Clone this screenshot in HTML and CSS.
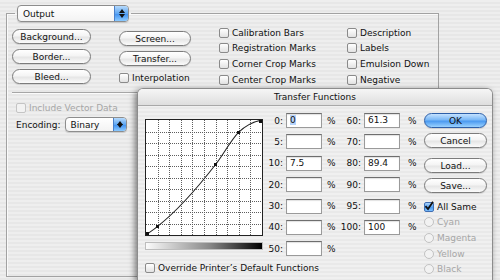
FILE: index.html
```html
<!DOCTYPE html>
<html lang="en">
<head>
  <meta charset="UTF-8" />
  <title>Output Options</title>
  <link rel="stylesheet" href="styles.css">
</head>
<body>
  <fieldset class="group">
    <legend><span class="popup popup-output">Output<i class="arrows"></i></span></legend>
    <div class="options">
      <div class="stack">
        <button class="aqua">Background...</button>
        <button class="aqua">Border...</button>
        <button class="aqua">Bleed...</button>
      </div>
      <div class="stack second">
        <button class="aqua">Screen...</button>
        <button class="aqua">Transfer...</button>
        <label class="check"><span class="box"></span>Interpolation</label>
      </div>
      <div class="check-list">
        <label class="check"><span class="box"></span>Calibration Bars</label>
        <label class="check"><span class="box"></span>Registration Marks</label>
        <label class="check"><span class="box"></span>Corner Crop Marks</label>
        <label class="check"><span class="box"></span>Center Crop Marks</label>
      </div>
      <div class="check-list">
        <label class="check"><span class="box"></span>Description</label>
        <label class="check"><span class="box"></span>Labels</label>
        <label class="check"><span class="box"></span>Emulsion Down</label>
        <label class="check"><span class="box"></span>Negative</label>
      </div>
    </div>
    <hr class="sep">
    <label class="check disabled vector"><span class="box"></span>Include Vector Data</label>
    <div class="encoding">
      <span>Encoding:</span>
      <span class="popup popup-small">Binary<i class="arrows"></i></span>
    </div>
  </fieldset>

  <div class="dialog">
    <div class="dialog-title">Transfer Functions</div>
    <div class="dialog-body">
      <div class="curve-col">
        <div class="graph">
          <svg width="116" height="115" viewBox="0 0 116 115">
            <g stroke="#5e5e5e" stroke-width="1" stroke-dasharray="1 1">
              <path d="M12.5 0V115M23.5 0V115M35.5 0V115M46.5 0V115M58.5 0V115M70.5 0V115M81.5 0V115M93.5 0V115M104.5 0V115"/>
              <path d="M0 12.5H116M0 23.5H116M0 35.5H116M0 46.5H116M0 58.5H116M0 69.5H116M0 81.5H116M0 92.5H116M0 104.5H116"/>
            </g>
            <g transform="scale(1.16 1.15)">
              <path fill="none" stroke="#222" stroke-width="0.9"
                d="M0 100C3.33 97.5 6.67 95.33 10 92.5C26.67 79.2 43.33 60.37 60 38.7C66.67 30.03 73.33 17.27 80 10.6C86.67 3.93 93.33 1.33 100 0"/>
            </g>
            <g fill="#111">
              <rect x="0" y="112" width="3" height="3"/>
              <rect x="10" y="105" width="3" height="3"/>
              <rect x="68" y="43" width="3" height="3"/>
              <rect x="91" y="11" width="3" height="3"/>
              <rect x="113" y="0" width="3" height="3"/>
            </g>
          </svg>
        </div>
        <div class="ramp"></div>
        <label class="check override"><span class="box"></span>Override Printer’s Default Functions</label>
      </div>

      <div class="fields">
        <span class="lbl">0:</span><span class="field"><span class="sel">0</span></span><span class="pct">%</span>
        <span class="lbl">60:</span><span class="field">61.3</span><span class="pct pct2">%</span>

        <span class="lbl">5:</span><span class="field"></span><span class="pct">%</span>
        <span class="lbl">70:</span><span class="field"></span><span class="pct pct2">%</span>

        <span class="lbl">10:</span><span class="field">7.5</span><span class="pct">%</span>
        <span class="lbl">80:</span><span class="field">89.4</span><span class="pct pct2">%</span>

        <span class="lbl">20:</span><span class="field"></span><span class="pct">%</span>
        <span class="lbl">90:</span><span class="field"></span><span class="pct pct2">%</span>

        <span class="lbl">30:</span><span class="field"></span><span class="pct">%</span>
        <span class="lbl">95:</span><span class="field"></span><span class="pct pct2">%</span>

        <span class="lbl">40:</span><span class="field"></span><span class="pct">%</span>
        <span class="lbl">100:</span><span class="field">100</span><span class="pct pct2">%</span>

        <span class="lbl">50:</span><span class="field"></span><span class="pct">%</span>
      </div>

      <div class="actions">
        <button class="aqua default">OK</button>
        <button class="aqua cancel">Cancel</button>
        <button class="aqua load">Load...</button>
        <button class="aqua save">Save...</button>
        <div class="inks">
          <label class="check checked">
            <span class="box"><svg width="10" height="10" viewBox="0 0 10 10"><path d="M1.5 5.2L4 8L9 0.8" fill="none" stroke="#111" stroke-width="1.8"/></svg></span>All Same
          </label>
          <label class="radio disabled"><span class="dot"></span>Cyan</label>
          <label class="radio disabled"><span class="dot"></span>Magenta</label>
          <label class="radio disabled"><span class="dot"></span>Yellow</label>
          <label class="radio disabled"><span class="dot"></span>Black</label>
        </div>
      </div>
    </div>
  </div>
</body>
</html>
```

FILE: styles.css
```css
* { box-sizing: border-box; }
body {
  margin: 0;
  padding: 5px 0 0 6px;
  width: 500px;
  height: 280px;
  overflow: hidden;
  font-family: 'DejaVu Sans', sans-serif;
  font-size: 9px;
  color: #111;
  background: repeating-linear-gradient(#eeeeee 0 2px, #e7e7e7 2px 4px);
}

/* outer group box */
.group {
  margin: 0;
  width: 433px;
  height: 272px;
  padding: 7px 5px 0 5px;
  border: 1px solid #a2a2a2;
  box-shadow: inset 1px 1px 0 #fafafa;
  min-width: 0;
}
.group legend {
  padding: 0 2px;
  margin-left: 3px;
}

/* popup menus */
.popup {
  position: relative;
  display: flex;
  align-items: center;
  background: linear-gradient(#ffffff, #f3f3f3);
  border: 1px solid #8d8d8d;
  border-radius: 4px;
  box-shadow: 0 1px 1px rgba(0,0,0,0.15);
  overflow: hidden;
}
.popup-output { width: 112px; height: 17px; padding-left: 5px; }
.popup-small { width: 62px; height: 15px; padding-left: 5px; }
.arrows {
  position: absolute;
  top: 0;
  right: 0;
  bottom: 0;
  width: 14px;
  border-left: 1px solid #4a7fc8;
  background: linear-gradient(#b6dafc, #5ea6f2 50%, #3d8ff0 51%, #8ccaff);
}
.popup-small .arrows { width: 13px; }
.arrows::before, .arrows::after {
  content: "";
  position: absolute;
  left: 50%;
  margin-left: -3px;
  border-left: 3px solid transparent;
  border-right: 3px solid transparent;
}
.arrows::before { top: 3px; border-bottom: 4px solid #111; }
.arrows::after { bottom: 3px; border-top: 4px solid #111; }

/* option columns */
.options {
  display: grid;
  grid-template-columns: 107px 100px 128px auto;
  align-items: start;
}
.stack {
  display: flex;
  flex-direction: column;
  align-items: flex-start;
  gap: 5px;
}
.stack .aqua { width: 79px; }
.stack.second { margin-top: 2px; }
.stack.second .aqua { width: 72px; }
.stack.second .check { margin-top: 1px; }
.check-list {
  display: flex;
  flex-direction: column;
  margin-top: -4px;
}
.check-list .check { height: 15.6px; }

/* aqua push buttons */
.aqua {
  height: 15px;
  padding: 0;
  font-family: inherit;
  font-size: 9px;
  color: #111;
  border: 1px solid #7c7c7c;
  border-radius: 8px;
  background: linear-gradient(#ffffff, #f4f4f4 45%, #e6e6e6 55%, #fbfbfb);
  box-shadow: 0 1px 1px rgba(0,0,0,0.12);
}
.aqua.default {
  border-color: #2d5fa8;
  background: linear-gradient(#c4e2ff, #7ab8f6 45%, #4b9af0 55%, #9ad2ff);
}

/* checkboxes and radios */
.check, .radio {
  display: flex;
  align-items: center;
  gap: 3px;
  height: 11px;
  white-space: nowrap;
}
.box {
  width: 10px;
  height: 10px;
  flex: none;
  border: 1px solid #8a8a8a;
  border-radius: 2px;
  background: linear-gradient(#ffffff, #e2e2e2);
}
.check.checked .box {
  position: relative;
  border-color: #3f6eb3;
  background: linear-gradient(#aad3fb, #4e9cf0 55%, #7dc0ff);
}
.check.checked svg { position: absolute; left: -1px; top: -2px; }
.dot {
  width: 10px;
  height: 10px;
  flex: none;
  border: 1px solid #c2c2c2;
  border-radius: 50%;
  background: #f2f2f2;
}
.disabled { color: #a6a6a6; }
.disabled .box { border-color: #c4c4c4; background: #f2f2f2; }

.sep {
  margin: 5px 4px 0 0;
  height: 2px;
  border: none;
  border-top: 1px solid #a6a6a6;
  border-bottom: 1px solid #fbfbfb;
}
.vector { margin: 8px 0 0 4px; }
.encoding {
  display: flex;
  align-items: center;
  gap: 4px;
  margin: 4px 0 0 4px;
}

/* transfer functions dialog */
.dialog {
  position: absolute;
  left: 137px;
  top: 88px;
  width: 356px;
  height: 192px;
  border: 1px solid #8c8c8c;
  border-bottom: none;
  border-radius: 6px 6px 0 0;
  background: repeating-linear-gradient(#f0f0f0 0 2px, #e9e9e9 2px 4px);
  box-shadow: -2px 2px 6px rgba(0,0,0,0.5);
  overflow: hidden;
}
.dialog-title {
  height: 17px;
  line-height: 16px;
  text-align: center;
  background: linear-gradient(#f6f6f6, #dedede);
  border-bottom: 1px solid #a8a8a8;
}
.dialog-body {
  display: flex;
  align-items: flex-start;
  padding: 7px 0 0 7px;
}
.curve-col {
  width: 118px;
  display: flex;
  flex-direction: column;
}
.graph {
  width: 118px;
  height: 117px;
  margin-top: 6px;
  border: 1px solid #222;
  background: #fff;
}
.graph svg { display: block; }
.ramp {
  height: 8px;
  margin-top: 6px;
  border: 1px solid #bdbdbd;
  background: linear-gradient(to right, #fbfbfb, #888 55%, #000);
}
.override { margin-top: 12px; }

.fields {
  display: grid;
  grid-template-columns: 23px 36px 18px 24px 36px 24px;
  grid-auto-rows: 15px;
  row-gap: 6.4px;
  align-items: center;
}
.lbl { text-align: right; padding-right: 3px; }
.field {
  height: 15px;
  padding: 0 3px;
  line-height: 13px;
  background: #fff;
  border: 1px solid #9a9a9a;
  border-top-color: #6e6e6e;
  box-shadow: inset 0 1px 1px rgba(0,0,0,0.12);
}
.sel { background: #b5d3fb; }
.pct { padding-left: 5px; }
.pct2 { padding-left: 8px; }

.actions {
  width: 63px;
  display: flex;
  flex-direction: column;
}
.actions .aqua { width: 63px; }
.cancel { margin-top: 5px; }
.load { margin-top: 10px; }
.save { margin-top: 5px; }
.inks {
  display: flex;
  flex-direction: column;
  margin-top: 6px;
}
.inks .check, .inks .radio { height: 15.6px; }
```
